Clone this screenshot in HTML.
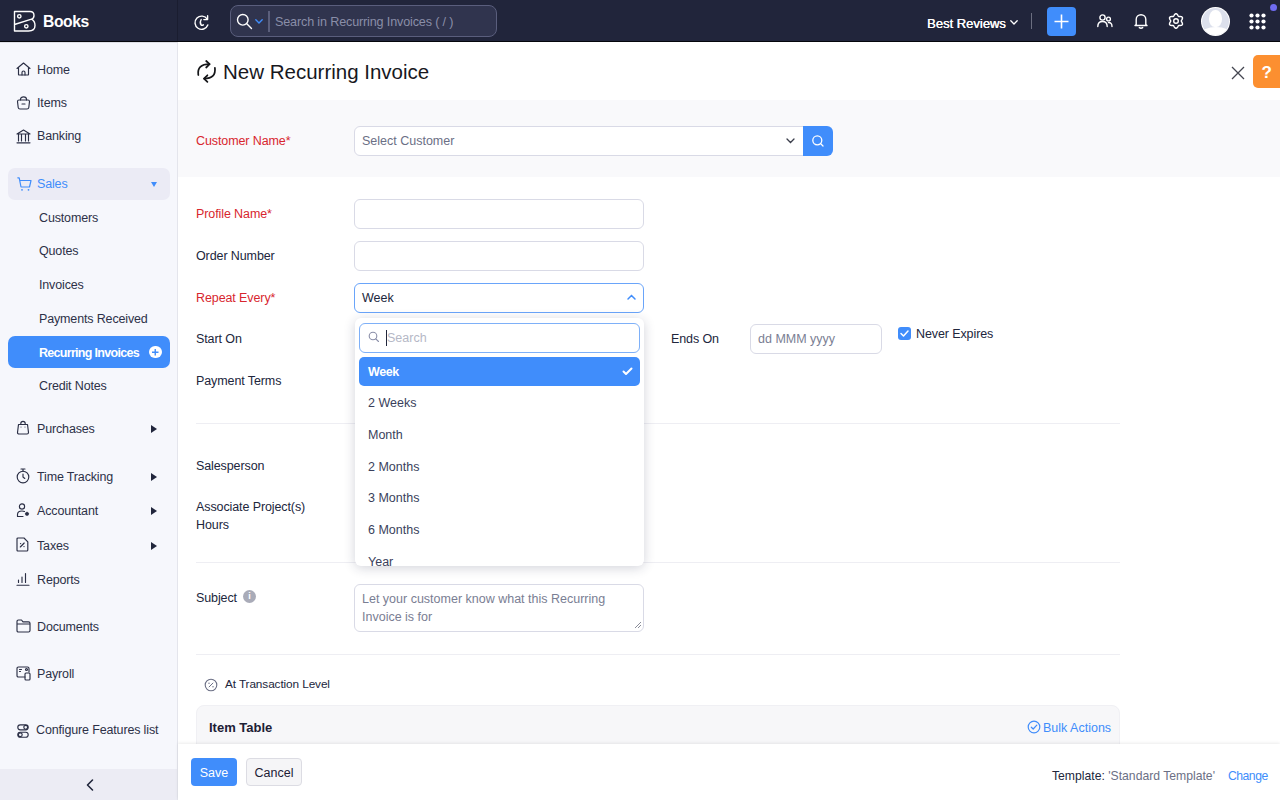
<!DOCTYPE html>
<html><head><meta charset="utf-8">
<style>
*{box-sizing:border-box;margin:0;padding:0}
html,body{width:1280px;height:800px;overflow:hidden;background:#fff;font-family:"Liberation Sans",sans-serif;color:#21263c;font-size:12.5px}
.abs{position:absolute}
svg{position:absolute;overflow:visible}
#top{position:absolute;left:0;top:0;width:1280px;height:42px;background:#21253b;border-bottom:1px solid #05060c}
#topl{position:absolute;left:0;top:0;width:178px;height:41px;background:#21253b;border-right:1px solid #1a1d30}
#side{position:absolute;left:0;top:42px;width:178px;height:758px;background:#f6f7fc;border-right:1px solid #e4e5ec}
.nav{position:absolute;left:37px;font-size:12.5px;color:#2d3148;white-space:nowrap;line-height:14px;letter-spacing:-0.15px}
.sub{left:39px}
.arr{position:absolute;left:151px;width:0;height:0;border-top:4px solid transparent;border-bottom:4px solid transparent;border-left:6px solid #21263c}
.si{stroke:#2b2f45;stroke-width:1.15;fill:none;stroke-linecap:round;stroke-linejoin:round}
.ti{stroke:#fff;stroke-width:1.4;fill:none;stroke-linecap:round;stroke-linejoin:round}
.lbl{position:absolute;left:196px;font-size:12.5px;color:#21263c;white-space:nowrap;line-height:14px;letter-spacing:-0.1px}
.red{color:#d8262e}
.inp{position:absolute;left:354px;width:290px;height:30px;border:1px solid #d9dae6;border-radius:6px;background:#fff}
.hr{position:absolute;left:196px;width:924px;height:1px;background:#eeeef3}
.dd{position:absolute;left:368px;font-size:12.5px;color:#3a3f5c;line-height:14px}
</style></head><body>
<div id="top">
  <div id="topl"></div>
  <!-- logo -->
  <svg style="left:13px;top:10px" width="24" height="23" viewBox="0 0 24 23">
    <path class="ti" stroke-width="2.3" d="M1.5 1.5 H17 Q21 1.5 21 5.5 Q21 8.3 18.5 9.2 L1.5 14.5 M1.5 1.5 V21 H15.5 Q22 21 22 15.5 Q22 11 18.5 9.2"/>
    <circle class="ti" stroke-width="1.7" cx="6.3" cy="6.3" r="1.7"/>
    <circle class="ti" stroke-width="1.7" cx="13.3" cy="16.3" r="1.7"/>
  </svg>
  <div class="abs" style="left:43px;top:11.8px;font-size:15.7px;font-weight:bold;color:#fff;letter-spacing:-0.4px;line-height:19px">Books</div>
  <!-- history -->
  <svg style="left:193px;top:14px" width="17" height="17" viewBox="0 0 17 17">
    <path class="ti" d="M14.2 5.2 A6.6 6.6 0 1 0 14.8 11"/>
    <path class="ti" d="M14.6 1.8 V5.6 H10.8"/>
    <path class="ti" d="M8.2 5.5 Q6.3 8.5 8.2 11.2 Q9.5 11.4 10.4 10.8"/>
  </svg>
  <!-- search -->
  <div class="abs" style="left:230px;top:5px;width:267px;height:32px;border:1.5px solid #5a5e7d;border-radius:8px;background:#30344e"></div>
  <svg style="left:236px;top:13px" width="18" height="18" viewBox="0 0 18 18">
    <circle class="ti" stroke-width="1.7" cx="6.8" cy="6.8" r="5.3"/>
    <path class="ti" stroke-width="1.7" d="M10.8 10.8 L15.5 15.5"/>
  </svg>
  <svg style="left:255px;top:19px" width="8" height="5" viewBox="0 0 8 5"><path d="M0.8 0.8 L4 4 L7.2 0.8" stroke="#408dfb" stroke-width="1.4" fill="none" stroke-linecap="round"/></svg>
  <div class="abs" style="left:268px;top:11px;width:1.5px;height:21px;background:#5b5f7c"></div>
  <div class="abs" style="left:275px;top:15px;font-size:12.6px;color:#8a8ea8;line-height:15px;white-space:nowrap;letter-spacing:-0.15px">Search in Recurring Invoices ( / )</div>
  <!-- right -->
  <div class="abs" style="left:927px;top:15.7px;font-size:13px;color:#fff;line-height:15px;white-space:nowrap;text-shadow:0.3px 0 0 #fff">Best Reviews</div>
  <svg style="left:1010px;top:20px" width="8" height="5" viewBox="0 0 8 5"><path d="M0.8 0.8 L4 4 L7.2 0.8" stroke="#fff" stroke-width="1.3" fill="none" stroke-linecap="round"/></svg>
  <div class="abs" style="left:1031px;top:13px;width:1px;height:16px;background:#6b6e80"></div>
  <div class="abs" style="left:1047px;top:7px;width:29px;height:29px;background:#408dfb;border-radius:4px"></div>
  <svg style="left:1054px;top:14px" width="15" height="15" viewBox="0 0 15 15"><path d="M7.5 0.5 V14.5 M0.5 7.5 H14.5" stroke="#fff" stroke-width="1.6"/></svg>
  <svg style="left:1097px;top:14px" width="16" height="14" viewBox="0 0 16 14">
    <circle class="ti" stroke-width="1.3" cx="5.5" cy="3.5" r="2.6"/>
    <path class="ti" stroke-width="1.3" d="M0.8 12.5 Q0.8 7.5 5.5 7.5 Q10.2 7.5 10.2 12.5"/>
    <circle class="ti" stroke-width="1.3" cx="11.5" cy="5" r="1.9"/>
    <path class="ti" stroke-width="1.3" d="M11.5 8.5 Q15 8.5 15 12.5"/>
  </svg>
  <svg style="left:1134px;top:13px" width="14" height="16" viewBox="0 0 14 16">
    <path class="ti" stroke-width="1.3" d="M2.2 11.5 V6.5 A4.8 4.8 0 0 1 11.8 6.5 V11.5 L13 12.5 H1 Z"/>
    <path class="ti" stroke-width="1.3" d="M5.3 14.6 Q7 15.8 8.7 14.6"/>
  </svg>
  <svg style="left:1168px;top:13px" width="16" height="16" viewBox="0 0 16 16">
    <path class="ti" stroke-width="2" d="M8.00 0.70 L8.47 0.79 L8.91 1.05 L9.30 1.45 L9.63 1.91 L9.90 2.40 L10.14 2.83 L10.38 3.18 L10.65 3.41 L10.99 3.53 L11.40 3.56 L11.90 3.55 L12.45 3.55 L13.02 3.59 L13.56 3.73 L14.01 3.99 L14.32 4.35 L14.48 4.80 L14.47 5.32 L14.33 5.85 L14.09 6.37 L13.80 6.85 L13.55 7.27 L13.36 7.65 L13.30 8.00 L13.36 8.35 L13.55 8.73 L13.80 9.15 L14.09 9.63 L14.33 10.15 L14.47 10.68 L14.48 11.20 L14.32 11.65 L14.01 12.01 L13.56 12.27 L13.02 12.41 L12.45 12.45 L11.90 12.45 L11.40 12.44 L10.99 12.47 L10.65 12.59 L10.38 12.82 L10.14 13.17 L9.90 13.60 L9.63 14.09 L9.30 14.55 L8.91 14.95 L8.47 15.21 L8.00 15.30 L7.53 15.21 L7.09 14.95 L6.70 14.55 L6.37 14.09 L6.10 13.60 L5.86 13.17 L5.62 12.82 L5.35 12.59 L5.01 12.47 L4.60 12.44 L4.10 12.45 L3.55 12.45 L2.98 12.41 L2.44 12.27 L1.99 12.01 L1.68 11.65 L1.52 11.20 L1.53 10.68 L1.67 10.15 L1.91 9.63 L2.20 9.15 L2.45 8.73 L2.64 8.35 L2.70 8.00 L2.64 7.65 L2.45 7.27 L2.20 6.85 L1.91 6.37 L1.67 5.85 L1.53 5.32 L1.52 4.80 L1.68 4.35 L1.99 3.99 L2.44 3.73 L2.98 3.59 L3.55 3.55 L4.10 3.55 L4.60 3.56 L5.01 3.53 L5.35 3.41 L5.62 3.18 L5.86 2.83 L6.10 2.40 L6.37 1.91 L6.70 1.45 L7.09 1.05 L7.53 0.79Z"/>
    <circle class="ti" stroke-width="1.9" cx="8" cy="8" r="2.3"/>
  </svg>
  <div class="abs" style="left:1200.5px;top:6.5px;width:29.5px;height:29.5px;border-radius:50%;background:#fff;overflow:hidden">
    <div class="abs" style="left:1px;top:1px;width:27.5px;height:27.5px;border-radius:50%;background:#dce0ec;overflow:hidden">
      <div class="abs" style="left:7.5px;top:2.5px;width:12.5px;height:17px;border-radius:50% 50% 45% 45%;background:#fff"></div>
      <div class="abs" style="left:-1px;top:19px;width:30px;height:14px;border-radius:50% 50% 0 0;background:#fff"></div>
    </div>
  </div>
  <svg style="left:1249px;top:13px" width="17" height="17" viewBox="0 0 17 17" fill="#fff">
    <circle cx="2.5" cy="2.5" r="2.1"/><circle cx="8.5" cy="2.5" r="2.1"/><circle cx="14.5" cy="2.5" r="2.1"/>
    <circle cx="2.5" cy="8.5" r="2.1"/><circle cx="8.5" cy="8.5" r="2.1"/><circle cx="14.5" cy="8.5" r="2.1"/>
    <circle cx="2.5" cy="14.5" r="2.1"/><circle cx="8.5" cy="14.5" r="2.1"/><circle cx="14.5" cy="14.5" r="2.1"/>
  </svg>
  <div class="abs" style="left:1270px;top:4px;width:7px;height:7px;border-radius:50%;background:#6f6cf2"></div>
</div>

<div id="side">
</div>
<!-- sidebar content (absolute page coords) -->
<svg style="left:16px;top:62px" width="15" height="14" viewBox="0 0 15 14">
  <path class="si" d="M1 6.5 L7.5 1 L14 6.5 M2.5 5.5 V12.5 A0.8 0.8 0 0 0 3.3 13 H11.7 A0.8 0.8 0 0 0 12.5 12.5 V5.5"/>
  <path class="si" d="M6 13 V10.5 A1.5 1.5 0 0 1 9 10.5 V13"/>
</svg>
<div class="nav" style="top:62.5px">Home</div>
<svg style="left:16px;top:96px" width="15" height="14" viewBox="0 0 15 14">
  <path class="si" d="M4.5 4 V3.2 A3 2.4 0 0 1 10.5 3.2 V4"/>
  <path class="si" d="M1.5 5.5 Q1.5 4 3 4 H12 Q13.5 4 13.5 5.5 L12.8 11.5 Q12.6 13 11 13 H4 Q2.4 13 2.2 11.5 Z"/>
  <path class="si" d="M6 8 H9"/>
</svg>
<div class="nav" style="top:96px">Items</div>
<svg style="left:16px;top:129px" width="15" height="15" viewBox="0 0 15 15">
  <path class="si" d="M1 5 L7.5 1 L14 5 Z M2.5 5.5 V12 M5.5 5.5 V12 M9.5 5.5 V12 M12.5 5.5 V12 M1 13.8 H14"/>
</svg>
<div class="nav" style="top:129.2px">Banking</div>

<div class="abs" style="left:8px;top:168px;width:162px;height:32px;background:#ebebf5;border-radius:7px"></div>
<svg style="left:17px;top:177px" width="15" height="14" viewBox="0 0 15 14">
  <path d="M0.8 0.8 H2.2 L4 10 H12.5 L14 3.5 H2.8" stroke="#408dfb" stroke-width="1.2" fill="none" stroke-linecap="round" stroke-linejoin="round"/>
  <circle cx="5" cy="12.8" r="0.9" fill="#408dfb"/><circle cx="11.5" cy="12.8" r="0.9" fill="#408dfb"/>
</svg>
<div class="nav" style="top:176.8px;color:#408dfb">Sales</div>
<div class="abs" style="left:151px;top:182px;width:0;height:0;border-left:3.5px solid transparent;border-right:3.5px solid transparent;border-top:5px solid #408dfb"></div>

<div class="nav sub" style="top:210.8px">Customers</div>
<div class="nav sub" style="top:244.2px">Quotes</div>
<div class="nav sub" style="top:278.2px">Invoices</div>
<div class="nav sub" style="top:311.5px">Payments Received</div>
<div class="abs" style="left:8px;top:336px;width:162px;height:32px;background:#408dfb;border-radius:7px"></div>
<div class="nav sub" style="top:345.6px;color:#fff;font-weight:bold;letter-spacing:-0.7px">Recurring Invoices</div>
<div class="abs" style="left:149px;top:345.5px;width:12.5px;height:12.5px;border-radius:50%;background:#fff"></div>
<svg style="left:149px;top:345.5px" width="12.5" height="12.5" viewBox="0 0 12.5 12.5"><path d="M6.25 3 V9.5 M3 6.25 H9.5" stroke="#408dfb" stroke-width="1.4"/></svg>
<div class="nav sub" style="top:378.5px">Credit Notes</div>

<svg style="left:16px;top:420px" width="14" height="15" viewBox="0 0 14 15">
  <path class="si" d="M2.5 4.5 H11.5 L12.5 12.5 Q12.5 14 11 14 H3 Q1.5 14 1.5 12.5 Z"/>
  <path class="si" d="M4.8 4.5 V3.5 A2.2 2.2 0 0 1 9.2 3.5 V4.5"/>
  <circle cx="5" cy="7" r="0.5" fill="#2b2f45"/><circle cx="9" cy="7" r="0.5" fill="#2b2f45"/>
</svg>
<div class="nav" style="top:421.7px">Purchases</div>
<div class="arr" style="top:424.5px"></div>
<svg style="left:16px;top:468px" width="14" height="16" viewBox="0 0 14 16">
  <circle class="si" cx="7" cy="9" r="5.8"/>
  <path class="si" d="M5 1 H9 M7 1 V3.2 M7 6 V9 L8.8 10.5"/>
</svg>
<div class="nav" style="top:470.4px">Time Tracking</div>
<div class="arr" style="top:473.2px"></div>
<svg style="left:16px;top:503px" width="15" height="15" viewBox="0 0 15 15">
  <circle class="si" cx="6" cy="3.5" r="2.6"/>
  <path class="si" d="M1.5 13.5 V11.5 Q1.5 8 6 8 Q7.5 8 8.5 8.5 M1.5 13.5 H7"/>
  <path d="M11 9 L12.7 10.2 L12.1 12.2 H9.9 L9.3 10.2 Z" fill="#2b2f45" stroke="#2b2f45" stroke-width="0.8" stroke-linejoin="round"/>
</svg>
<div class="nav" style="top:504.3px">Accountant</div>
<div class="arr" style="top:507px"></div>
<svg style="left:16px;top:537px" width="13" height="15" viewBox="0 0 13 15">
  <path class="si" d="M2 1 H8 L11.8 4.8 V13 Q11.8 14 10.8 14 H2 Q1 14 1 13 V2 Q1 1 2 1 Z"/>
  <path class="si" d="M4.3 10 L8.2 6" stroke-width="1"/>
  <circle cx="4.6" cy="6.6" r="0.7" fill="#2b2f45"/><circle cx="8" cy="9.6" r="0.7" fill="#2b2f45"/>
</svg>
<div class="nav" style="top:538.7px">Taxes</div>
<div class="arr" style="top:541.5px"></div>
<svg style="left:16px;top:572px" width="14" height="14" viewBox="0 0 14 14">
  <path class="si" d="M1 13.2 H13 M2.5 10.5 V8 M6 10.5 V5 M9.5 10.5 V1.5"/>
</svg>
<div class="nav" style="top:572.7px">Reports</div>
<svg style="left:16px;top:619px" width="15" height="14" viewBox="0 0 15 14">
  <path class="si" d="M1 2.5 Q1 1 2.5 1 H5.5 L7 2.8 H12.5 Q14 2.8 14 4.3 V11.5 Q14 13 12.5 13 H2.5 Q1 13 1 11.5 Z M1 5 H14"/>
</svg>
<div class="nav" style="top:619.7px">Documents</div>
<svg style="left:16px;top:666px" width="15" height="15" viewBox="0 0 15 15">
  <path class="si" d="M9 11 H2.5 Q1 11 1 9.5 V2.5 Q1 1 2.5 1 H11.5 Q13 1 13 2.5 V6"/>
  <path class="si" d="M3.5 3.5 H5.5 M3.5 5.5 H4.5"/>
  <circle class="si" cx="10.5" cy="3.5" r="1"/>
  <path class="si" d="M9 8 Q9 7 10 7 H13 Q14 7 14 8 V13 Q14 14 13 14 H10 Q9 14 9 13 Z"/>
</svg>
<div class="nav" style="top:666.7px">Payroll</div>
<svg style="left:17px;top:723.5px" width="12" height="14" viewBox="0 0 12 14">
  <rect class="si" x="0.8" y="0.8" width="10.4" height="5" rx="2.5"/>
  <rect class="si" x="0.8" y="8.2" width="10.4" height="5" rx="2.5"/>
  <circle class="si" cx="8.7" cy="3.3" r="1.9"/>
  <circle class="si" cx="3.3" cy="10.7" r="1.9"/>
</svg>
<div class="nav" style="top:722.7px;left:36px">Configure Features list</div>
<div class="abs" style="left:0;top:769px;width:177px;height:31px;background:#ececf4"></div>
<div class="abs" style="left:0;top:42px;width:1280px;height:1px;background:#dedfe6"></div>
<svg style="left:86px;top:779px" width="8" height="12" viewBox="0 0 8 12"><path d="M6.5 1 L1.5 6 L6.5 11" stroke="#21263c" stroke-width="1.6" fill="none" stroke-linecap="round" stroke-linejoin="round"/></svg>

<!-- header -->
<div class="abs" style="left:178px;top:42px;width:1102px;height:58px;background:#fff"></div>
<svg style="left:190px;top:55px" width="30" height="30" viewBox="0 0 30 30">
  <g stroke="#141518" stroke-width="1.75" fill="none" stroke-linecap="round" stroke-linejoin="round">
  <path d="M8.3 20 Q6.8 9.2 19.4 9.2"/><path d="M16.2 6 L19.6 9.2 L16.2 12.5"/>
  <path d="M24.9 12.8 Q26.2 23.6 14.2 23.6"/><path d="M17.4 20.3 L14 23.6 L17.4 26.8"/>
  </g>
</svg>
<div class="abs" style="left:223px;top:61px;font-size:20.5px;color:#17181e;line-height:22px;white-space:nowrap">New Recurring Invoice</div>
<svg style="left:1231px;top:66px" width="14" height="14" viewBox="0 0 14 14"><path d="M1 1 L13 13 M13 1 L1 13" stroke="#444650" stroke-width="1.3"/></svg>
<div class="abs" style="left:1253px;top:55px;width:30px;height:33px;background:#fc8f30;border-radius:5px 0 0 5px"></div>
<div class="abs" style="left:1261.5px;top:63px;font-size:17px;font-weight:bold;color:#fff;line-height:20px">?</div>

<div class="abs" style="left:178px;top:100px;width:1102px;height:77px;background:#f9f9fb"></div>

<div class="lbl red" style="top:134.1px">Customer Name*</div>
<div class="inp" style="top:126px;width:450px;height:30px;border-radius:6px 0 0 6px"></div>
<div class="abs" style="left:362px;top:134px;color:#6b6f85;line-height:14px">Select Customer</div>
<svg style="left:786px;top:138px" width="9" height="6" viewBox="0 0 9 6"><path d="M1 1 L4.5 4.5 L8 1" stroke="#3a3d4a" stroke-width="1.3" fill="none" stroke-linecap="round"/></svg>
<div class="abs" style="left:803px;top:126px;width:30px;height:30px;background:#408dfb;border-radius:0 6px 6px 0"></div>
<svg style="left:811px;top:134px" width="14" height="14" viewBox="0 0 14 14"><circle cx="6.3" cy="6.3" r="4.5" stroke="#fff" stroke-width="1.3" fill="none"/><path d="M9.5 9.5 L12 12" stroke="#fff" stroke-width="1.3" stroke-linecap="round"/></svg>

<div class="lbl red" style="top:207px">Profile Name*</div>
<div class="inp" style="top:199px"></div>
<div class="lbl" style="top:249px">Order Number</div>
<div class="inp" style="top:241px"></div>
<div class="lbl red" style="top:291px">Repeat Every*</div>
<div class="inp" style="top:283px;border-color:#6aa5fa"></div>
<div class="abs" style="left:362px;top:291px;line-height:14px">Week</div>
<svg style="left:627px;top:294px" width="9" height="6" viewBox="0 0 9 6"><path d="M1 5 L4.5 1.5 L8 5" stroke="#408dfb" stroke-width="1.5" fill="none" stroke-linecap="round"/></svg>

<div class="lbl" style="top:332px">Start On</div>
<div class="lbl" style="top:332px;left:671px">Ends On</div>
<div class="abs" style="left:750px;top:324px;width:132px;height:30px;border:1px solid #d9dae6;border-radius:6px"></div>
<div class="abs" style="left:758px;top:332px;color:#7a7e93;line-height:14px">dd MMM yyyy</div>
<div class="abs" style="left:898px;top:327px;width:13px;height:13px;background:#408dfb;border-radius:3px"></div>
<svg style="left:898px;top:327px" width="13" height="13" viewBox="0 0 13 13"><path d="M3 6.5 L5.5 9 L10 4" stroke="#fff" stroke-width="1.5" fill="none" stroke-linecap="round" stroke-linejoin="round"/></svg>
<div class="lbl" style="top:327px;left:916px">Never Expires</div>
<div class="lbl" style="top:374px">Payment Terms</div>
<div class="hr" style="top:423px"></div>
<div class="lbl" style="top:459px">Salesperson</div>
<div class="lbl" style="top:500px">Associate Project(s)</div>
<div class="lbl" style="top:518px">Hours</div>
<div class="hr" style="top:562px"></div>
<div class="lbl" style="top:591px">Subject</div>
<div class="abs" style="left:243px;top:590px;width:13px;height:13px;border-radius:50%;background:#a9abb8;color:#fff;font-size:9px;font-weight:bold;text-align:center;line-height:13px">i</div>
<div class="inp" style="top:584px;height:48px"></div>
<div class="abs" style="left:362px;top:589.5px;color:#7a7e93;line-height:18px;width:270px">Let your customer know what this Recurring Invoice is for</div>
<svg style="left:633px;top:620px" width="9" height="9" viewBox="0 0 9 9"><path d="M8 2 L2 8 M8 5 L5 8" stroke="#8a8d99" stroke-width="1"/></svg>
<div class="hr" style="top:654px"></div>

<svg style="left:204px;top:678px" width="14" height="14" viewBox="0 0 14 14">
  <circle cx="7" cy="7" r="5.8" stroke="#6b6f85" stroke-width="1.1" fill="none"/>
  <path d="M4.8 9.2 L9.2 4.8" stroke="#6b6f85" stroke-width="1"/>
  <circle cx="5" cy="5.3" r="0.7" fill="#6b6f85"/><circle cx="9" cy="8.7" r="0.7" fill="#6b6f85"/>
</svg>
<div class="lbl" style="top:677px;left:225px;font-size:11.8px">At Transaction Level</div>
<div class="abs" style="left:196px;top:705px;width:924px;height:45px;background:#f7f7f9;border-radius:8px 8px 0 0;border:1px solid #f0f0f4"></div>
<div class="abs" style="left:209px;top:720px;font-size:13px;font-weight:bold;color:#1d2035;line-height:15px">Item Table</div>
<svg style="left:1027px;top:720px" width="14" height="14" viewBox="0 0 14 14"><circle cx="7" cy="7" r="5.8" stroke="#408dfb" stroke-width="1.2" fill="none"/><path d="M4.3 7.2 L6.2 9 L9.8 5.2" stroke="#408dfb" stroke-width="1.2" fill="none" stroke-linecap="round" stroke-linejoin="round"/></svg>
<div class="abs" style="left:1043px;top:720.8px;color:#408dfb;line-height:15px;font-size:12.5px">Bulk Actions</div>

<!-- dropdown -->
<div class="abs" style="left:355px;top:318px;width:289px;height:248px;background:#fff;border-radius:6px;box-shadow:0 2px 12px rgba(30,35,70,.2)"></div>
<div class="abs" style="left:359px;top:323px;width:281px;height:30px;border:1px solid #7eb0f8;border-radius:6px"></div>
<svg style="left:368px;top:331px" width="12" height="12" viewBox="0 0 12 12"><circle cx="5" cy="5" r="3.8" stroke="#8a8ea8" stroke-width="1.1" fill="none"/><path d="M7.8 7.8 L10.5 10.5" stroke="#8a8ea8" stroke-width="1.1" stroke-linecap="round"/></svg>
<div class="abs" style="left:386px;top:330px;width:1px;height:16px;background:#21263c"></div>
<div class="abs" style="left:387px;top:331px;color:#b5b8c6;line-height:14px">Search</div>
<div class="abs" style="left:359px;top:357px;width:281px;height:29px;background:#408dfb;border-radius:5px"></div>
<div class="dd" style="top:365px;color:#fff;font-weight:bold;letter-spacing:-0.4px">Week</div>
<svg style="left:622px;top:367px" width="11" height="9" viewBox="0 0 11 9"><path d="M1.5 4.5 L4 7 L9.5 1.5" stroke="#fff" stroke-width="2" fill="none" stroke-linecap="round" stroke-linejoin="round"/></svg>
<div class="dd" style="top:396px">2 Weeks</div>
<div class="dd" style="top:428px">Month</div>
<div class="dd" style="top:460px">2 Months</div>
<div class="dd" style="top:491px">3 Months</div>
<div class="dd" style="top:523px">6 Months</div>
<div class="abs" style="left:355px;top:551px;width:289px;height:15px;overflow:hidden;border-radius:0 0 6px 6px"><div class="dd" style="top:4px;left:13px">Year</div></div>

<!-- footer -->
<div class="abs" style="left:178px;top:744px;width:1102px;height:56px;background:#fff;box-shadow:0 -1px 3px rgba(0,0,0,.08)"></div>
<div class="abs" style="left:191px;top:758px;width:46px;height:28px;background:#408dfb;border-radius:4px;color:#fff;text-align:center;line-height:30px">Save</div>
<div class="abs" style="left:246px;top:758px;width:56px;height:28px;background:#f5f5f7;border:1px solid #dcdce3;border-radius:4px;text-align:center;line-height:28px;color:#1d2035">Cancel</div>
<div class="abs" style="left:1052px;top:769px;line-height:14px;white-space:nowrap;font-size:12.2px">Template: <span style="color:#6b6f85">'Standard Template'</span></div>
<div class="abs" style="left:1228px;top:769px;line-height:14px;color:#408dfb;font-size:12.2px;letter-spacing:-0.5px">Change</div>
</body></html>
